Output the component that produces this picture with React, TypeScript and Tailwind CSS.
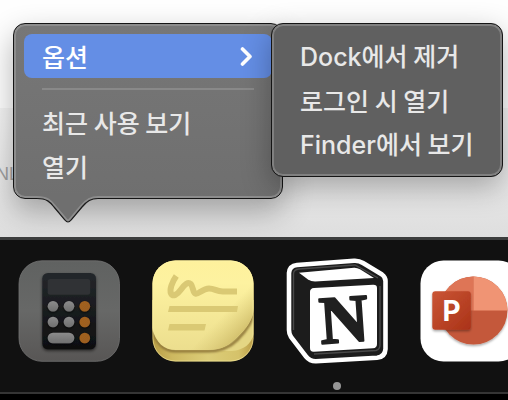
import React from 'react';
import { clsx } from 'clsx';

interface MenuEntryProps {
  label: string;
  app?: string;
  active?: boolean;
}

const panel =
  "flex flex-col rounded-xl border border-[#151515] p-2.5 font-['Noto_Sans_CJK_KR',sans-serif] text-[25px] font-medium leading-8";

const submenu_items = [
  { app: 'Dock', label: '에서 제거' },
  { label: '로그인 시 열기' },
  { app: 'Finder', label: '에서 보기' },
];

const MenuEntry: React.FC<MenuEntryProps> = ({ label, app, active }) => (
  <button
    type="button"
    role="menuitem"
    aria-haspopup={active ? 'menu' : undefined}
    className={clsx(
      'flex h-11 w-full items-center justify-between whitespace-nowrap rounded-lg px-[18px] text-left',
      active ? 'bg-[#648ee5] text-white' : 'text-[#e8e8e8]'
    )}
  >
    <span>
      {app && <span className="font-['Inter',sans-serif]">{app}</span>}
      {label}
    </span>
    {active && (
      <svg width="14" height="20" viewBox="0 0 14 20" fill="none" aria-hidden="true">
        <path d="M2.5 3 L10 10.5 L2.5 18" stroke="#fff" strokeWidth="3.6" strokeLinecap="round" strokeLinejoin="round" />
      </svg>
    )}
  </button>
);

const Pointer = () => (
  <svg className="absolute top-full left-5 -mt-1" width="70" height="32" viewBox="0 0 70 32" fill="none" aria-hidden="true">
    <defs>
      <clipPath id="pointer-clip">
        <path d="M3 0 V4.5 C13 4.5 16 8 20 13 L31 26 Q34 30 37 26 L48 13 C53 7 57 4.5 64 4.5 V0 Z" />
      </clipPath>
    </defs>
    <g clipPath="url(#pointer-clip)">
      <rect width="70" height="32" fill="#6f6f6f" />
      <path d="M3 4.5 C13 4.5 16 8 20 13 L31 26 Q34 30 37 26 L48 13 C53 7 57 4.5 64 4.5" stroke="#8d8d8d" strokeWidth="5" />
    </g>
    <path d="M3 4.5 C13 4.5 16 8 20 13 L31 26 Q34 30 37 26 L48 13 C53 7 57 4.5 64 4.5" stroke="#1c1c1c" strokeWidth="1.2" />
  </svg>
);

const CalculatorIcon = () => (
  <svg className="size-full" viewBox="0 0 102 102" aria-hidden="true">
    <defs>
      <linearGradient id="calc-bg" x1="0" y1="0" x2="0" y2="1">
        <stop offset="0" stopColor="#606261" />
        <stop offset="0.5" stopColor="#676867" />
        <stop offset="1" stopColor="#585655" />
      </linearGradient>
      <linearGradient id="calc-body" x1="0" y1="0" x2="0" y2="1">
        <stop offset="0" stopColor="#24272b" />
        <stop offset="1" stopColor="#0e0f10" />
      </linearGradient>
      <linearGradient id="calc-key" x1="0" y1="0" x2="0" y2="1">
        <stop offset="0" stopColor="#8c8c8c" />
        <stop offset="1" stopColor="#6f6f6f" />
      </linearGradient>
      <linearGradient id="calc-op" x1="0" y1="0" x2="1" y2="1">
        <stop offset="0" stopColor="#a3621f" />
        <stop offset="1" stopColor="#9a5d20" />
      </linearGradient>
      <filter id="calc-shadow" x="-20%" y="-20%" width="140%" height="140%">
        <feDropShadow dx="0" dy="1.5" stdDeviation="1.6" floodOpacity="0.6" />
      </filter>
      <filter id="key-shadow" x="-30%" y="-30%" width="160%" height="160%">
        <feDropShadow dx="0" dy="1" stdDeviation="0.8" floodOpacity="0.8" />
      </filter>
    </defs>
    <rect x="1" y="0.8" width="100.5" height="100.5" rx="23" fill="url(#calc-bg)" stroke="#747474" strokeWidth="0.8" />
    <rect x="24.3" y="13" width="53.7" height="76.3" rx="5.5" fill="url(#calc-body)" filter="url(#calc-shadow)" />
    <rect x="29.7" y="19" width="42.5" height="15.8" rx="2.5" fill="#303235" />
    <g filter="url(#key-shadow)">
      {[46.3, 62, 78].map((y) => (
        <circle key={y} cx="66.8" cy={y} r="5.3" fill="url(#calc-op)" />
      ))}
      {[46.3, 62].map((y) => (
        <g key={y} fill="url(#calc-key)">
          <circle cx="35" cy={y} r="5.3" />
          <circle cx="51" cy={y} r="5.3" />
        </g>
      ))}
      <rect x="29.7" y="72.7" width="26.6" height="10.6" rx="5.3" fill="url(#calc-key)" />
    </g>
  </svg>
);

const StickiesIcon = () => (
  <svg className="size-full" viewBox="0 0 102 102" fill="none" aria-hidden="true">
    <defs>
      <linearGradient id="note-side" x1="0" y1="0" x2="1" y2="0">
        <stop offset="0" stopColor="#b89d45" />
        <stop offset="0.2" stopColor="#cdb860" />
        <stop offset="0.55" stopColor="#dccd78" />
        <stop offset="0.85" stopColor="#d5c26a" />
        <stop offset="1" stopColor="#b99b45" />
      </linearGradient>
      <linearGradient id="note-top" x1="0" y1="0" x2="0" y2="1">
        <stop offset="0" stopColor="#fef19c" />
        <stop offset="0.25" stopColor="#fdf2a0" />
        <stop offset="1" stopColor="#ecde8e" />
      </linearGradient>
      <linearGradient id="note-curl" gradientUnits="userSpaceOnUse" x1="66" y1="60" x2="87" y2="80">
        <stop offset="0" stopColor="#d6c673" stopOpacity="0" />
        <stop offset="1" stopColor="#cdb965" stopOpacity="0.9" />
      </linearGradient>
      <filter id="note-blur">
        <feGaussianBlur stdDeviation="1.1" />
      </filter>
      <clipPath id="note-clip">
        <rect x="0.5" y="0.5" width="101" height="101" rx="23" />
      </clipPath>
    </defs>
    <g clipPath="url(#note-clip)">
      <rect width="102" height="102" fill="url(#note-side)" />
      <path d="M0 70 C4 84 12 91 24 91 H80 C92 90 99 84 102 74 V40 H0 Z" fill="#e4d684" />
      <path d="M0 68 C4 83 12 91 24 91 H56 C70 91 78 87 85 80 C94 71 101 62 102 50" stroke="#8e7637" strokeWidth="3" filter="url(#note-blur)" />
      <path d="M0 0 H102 V48 C101 60 94 69 85 77 C77 85 70 90 56 90 H24 C12 90 4 83 0 68 Z" fill="url(#note-top)" />
      <path d="M0 0 H102 V48 C101 60 94 69 85 77 C77 85 70 90 56 90 H24 C12 90 4 83 0 68 Z" fill="url(#note-curl)" />
    </g>
    <rect x="1" y="1" width="100" height="100" rx="22.5" stroke="#fff7b0" strokeOpacity="0.45" />
    <path
      d="M24.3 16 C20 22 17.3 30 19 33.5 C21 37 25 35 29 29.5 C33 24 36 21.5 38.8 24 C41.5 27 40.5 33 44 33.8 C47 34 51 28.5 57 28.5 C63 28.5 64 31.5 71 31.4 L85 31.4"
      stroke="#dac974"
      strokeWidth="6"
      strokeLinejoin="round"
    />
    <path d="M17.5 46 H86 L85 52 H16 Z M17.5 64 H54 L52.5 70.5 H16 Z" fill="#dac974" />
  </svg>
);

const NotionIcon = () => (
  <svg className="size-full overflow-visible" viewBox="0 0 102 102" fill="none" aria-hidden="true">
    <defs>
      <filter id="notion-soft">
        <feGaussianBlur stdDeviation="0.7" />
      </filter>
    </defs>
    <path
      d="M11 5 L68 0.8 Q73 0.5 77 3 L96 14.5 Q99.5 17 99.5 21 V89 Q99 97 91 97.8 L30 101.3 Q24 101.5 20 96.5 L5 77 Q3 74 3 70 V13 Q3.5 5.8 11 5 Z"
      fill="#1c1c1c"
      stroke="#fff"
      strokeWidth="4.6"
    />
    <g stroke="#484848" strokeWidth="1.4" filter="url(#notion-soft)">
      <path d="M7.5 70 V14 Q7.5 9.5 13 9 L69 5 L92 18" />
      <path d="M28 94 L90 90.5 Q94 89.5 94 85 V26" />
    </g>
    <path d="M13 12.8 L68 7.8 Q71 7.6 74 9.3 L88 18 L29 21.6 Q25 21.6 22 19.5 Z" fill="#fff" />
    <path d="M28 28 L87 24.8 Q91 24.6 91 28 V84 Q91 88 87 88.3 L28 91.7 Q24 92 24 88 V32 Q24 28.3 28 28 Z" fill="#fff" />
    <text
      x="58"
      y="82"
      textAnchor="middle"
      transform="rotate(-4 58 60)"
      className="font-['Liberation_Serif',serif] text-[68px] font-bold"
      fill="#202020"
      stroke="#202020"
      strokeWidth="2"
      strokeLinejoin="round"
    >
      N
    </text>
  </svg>
);

const PowerPointIcon = () => (
  <svg className="size-full" viewBox="0 0 102 102" aria-hidden="true">
    <defs>
      <linearGradient id="ppt-tile" x1="0" y1="0" x2="1" y2="1">
        <stop offset="0" stopColor="#ca5635" />
        <stop offset="1" stopColor="#aa3218" />
      </linearGradient>
      <filter id="ppt-shadow" x="-20%" y="-20%" width="140%" height="140%">
        <feDropShadow dx="0" dy="1.5" stdDeviation="1.3" floodOpacity="0.35" />
      </filter>
    </defs>
    <rect x="0.5" y="0.5" width="101" height="101" rx="23" fill="#fff" />
    <g filter="url(#ppt-shadow)">
      <circle cx="53.5" cy="50.5" r="34" fill="#c4593b" />
    </g>
    <path d="M53.5 50.5 H19.5 A34 34 0 0 1 53.5 16.5 Z" fill="#de7556" />
    <path d="M53.5 50.5 V16.5 A34 34 0 0 1 87.5 50.5 Z" fill="#f09474" />
    <rect x="12.3" y="31.3" width="38.5" height="38.5" rx="3" fill="url(#ppt-tile)" filter="url(#ppt-shadow)" />
    <text x="31.5" y="61" textAnchor="middle" className="font-['Inter',sans-serif] text-[28px] font-bold" fill="#fff">
      P
    </text>
  </svg>
);

const apps = [
  { name: 'Calculator', Icon: CalculatorIcon, running: false },
  { name: 'Stickies', Icon: StickiesIcon, running: false },
  { name: 'Notion', Icon: NotionIcon, running: true },
  { name: 'PowerPoint', Icon: PowerPointIcon, running: false },
];

const App: React.FC = () => {
  return (
    <div className="relative flex min-h-screen flex-col overflow-hidden bg-black">
      <main className="flex grow flex-col bg-white">
        <div className="h-[108px] bg-[#fefefe]" />
        <div className="grow bg-linear-to-b from-[#f5f5f5] to-[#dedede] pt-[54px]">
          <p className="-ml-1 font-['Liberation_Sans',sans-serif] text-lg leading-6 text-[#a0a0a0]">NL</p>
        </div>
      </main>

      <div className="absolute top-[23px] left-[13px] flex items-start">
        <div
          role="menu"
          className={clsx(panel, 'relative w-[270px] bg-linear-to-b from-[#777] to-[#6f6f6f] shadow-[inset_0_0_0_2px_#8d8d8d,0_12px_30px_rgba(0,0,0,0.3)]')}
        >
          <MenuEntry label="옵션" active />
          <hr className="mx-[18px] my-2.5 h-0.5 border-0 bg-[#898989]" />
          <MenuEntry label="최근 사용 보기" />
          <MenuEntry label="열기" />
          <Pointer />
        </div>
        <div
          role="menu"
          className={clsx(panel, 'relative -ml-3 w-[232px] bg-[#606060] shadow-[inset_0_0_0_2px_#808080,0_10px_30px_rgba(0,0,0,0.3)]')}
        >
          {submenu_items.map((item) => (
            <MenuEntry app={item.app} label={item.label} key={item.label} />
          ))}
        </div>
      </div>

      <nav
        aria-label="Dock"
        className="relative mb-1.5 flex gap-8 border-t-3 border-b-2 border-t-[#3c3d3d] border-b-[#353535] bg-[#111] pt-5 pl-[18px]"
      >
        {apps.map(({ name, Icon, running }) => (
          <button type="button" key={name} aria-label={name} className="flex shrink-0 flex-col items-center gap-5 pb-0.5">
            <span className="block size-[102px]">
              <Icon />
            </span>
            <span className={clsx('size-2 rounded-full', running && 'bg-[#969696]')} />
          </button>
        ))}
      </nav>
    </div>
  );
};

export default App;
